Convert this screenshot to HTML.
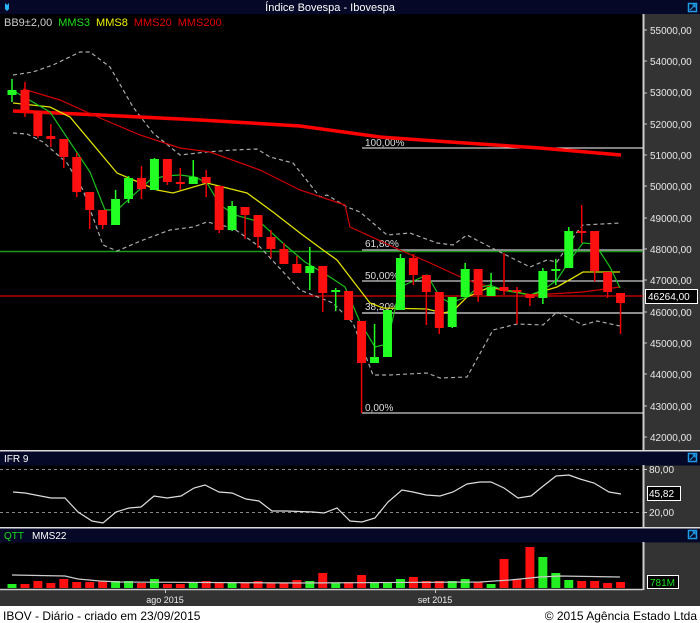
<!DOCTYPE html>
<html><head><meta charset="utf-8"><style>
html,body{margin:0;padding:0;background:#fff;}
svg{display:block;font-family:"Liberation Sans",sans-serif;}
</style></head><body>
<svg width="700" height="623" viewBox="0 0 700 623" xmlns="http://www.w3.org/2000/svg">
<rect x="0" y="0" width="700" height="623" fill="#fff"/>
<!-- header -->
<rect x="0" y="0" width="700" height="14" fill="#050826"/>
<path d="M5 3 L7 5 L9 3 L9 9 L7 11 L5 9 Z" fill="#29b6f6"/>
<text x="330" y="11" fill="#fff" font-size="11" text-anchor="middle">Índice Bovespa - Ibovespa</text>
<rect x="688.5" y="3.5" width="8" height="8" fill="none" stroke="#1e9ce6" stroke-width="1.5"/>
<path d="M690 10 L695 5 M692.5 5 H695 V7.5" stroke="#1e9ce6" stroke-width="1.2" fill="none"/>
<!-- main panel -->
<rect x="0" y="14" width="643" height="436" fill="#000"/>
<rect x="643" y="14" width="57" height="436" fill="#333"/>
<line x1="643.5" y1="14" x2="643.5" y2="450" stroke="#ccc" stroke-width="2"/>
<g font-size="10" fill="#e8e8e8">
<text x="650" y="34">55000,00</text><text x="650" y="65">54000,00</text><text x="650" y="96">53000,00</text><text x="650" y="128">52000,00</text><text x="650" y="159">51000,00</text><text x="650" y="190">50000,00</text><text x="650" y="222">49000,00</text><text x="650" y="253">48000,00</text><text x="650" y="284">47000,00</text><text x="650" y="316">46000,00</text><text x="650" y="347">45000,00</text><text x="650" y="378">44000,00</text><text x="650" y="410">43000,00</text><text x="650" y="441">42000,00</text>
</g>
<g stroke="#ccc" stroke-width="1">
<path d="M644 30h3M644 61h3M644 93h3M644 124h3M644 155h3M644 186h3M644 218h3M644 249h3M644 280h3M644 312h3M644 343h3M644 374h3M644 406h3M644 437h3"/>
</g>
<text x="4" y="26" font-size="11"><tspan fill="#ccc">BB9±2,00</tspan><tspan fill="#19e019" dx="6">MMS3</tspan><tspan fill="#f0f000" dx="6">MMS8</tspan><tspan fill="#e00000" dx="6">MMS20</tspan><tspan fill="#e00000" dx="6">MMS200</tspan></text>
<!-- fib lines -->
<line x1="362" y1="148" x2="643" y2="148" stroke="#fff" stroke-width="1"/>
<line x1="0" y1="251.5" x2="643" y2="251.5" stroke="#1a9a1a" stroke-width="1.5"/>
<line x1="362" y1="250" x2="643" y2="250" stroke="#aaa" stroke-width="1.5"/>
<line x1="362" y1="281" x2="643" y2="281" stroke="#fff" stroke-width="1"/>
<line x1="0" y1="296" x2="643" y2="296" stroke="#e00000" stroke-width="1.2"/>
<line x1="362" y1="313" x2="643" y2="313" stroke="#bbb" stroke-width="1.5"/>
<line x1="362" y1="413" x2="643" y2="413" stroke="#fff" stroke-width="1"/>
<g font-size="10" fill="#ddd">
<text x="365" y="146">100,00%</text><text x="365" y="247">61,80%</text><text x="365" y="279">50,00%</text><text x="365" y="310">38,20%</text><text x="365" y="411">0,00%</text>
</g>
<!-- bollinger -->
<g fill="none" stroke="#aaa" stroke-width="1.2" stroke-dasharray="4,3">
<polyline points="13,75 33,72 53,65 80,52 90,52 110,67 133,107 153,133 180,155 207,152 233,150 257,149 270,157 293,163 320,197 327,195 347,207 360,212 387,235 410,233 437,243 453,245 467,235 490,247 530,267 547,260 557,262 577,232 583,225 620,223"/>
<polyline points="13,133 27,134 43,142 67,163 83,190 103,245 117,251 143,240 170,230 193,227 207,222 233,228 260,247 300,290 333,303 353,323 373,375 390,375 427,373 440,378 467,377 493,330 517,324 543,325 557,312 583,325 597,321 620,326"/>
</g>
<!-- MMS200 -->
<polyline points="13,111 100,115 200,120 300,126 380,137 450,142 540,148 621,155" fill="none" stroke="#ff0000" stroke-width="3.5"/>
<!-- MMS20 -->
<polyline points="23,89 60,100 100,118 140,135 180,148 210,152 260,170 300,190 345,205 350,227 400,250 428,262 467,280 500,290 533,295 583,292 620,287" fill="none" stroke="#d00000" stroke-width="1.2"/>
<!-- MMS8 -->
<polyline points="13,103 50,107 70,117 117,173 157,190 173,193 207,183 247,193 273,212 300,233 323,250 337,260 350,277 370,303 383,308 427,309 443,313 453,311 467,297 490,287 530,295 557,287 583,272 620,272" fill="none" stroke="#e0e000" stroke-width="1.3"/>
<!-- MMS3 -->
<polyline points="12,90 50,112 90,172 105,210 117,210 150,180 165,176 180,175 195,177 207,183 220,205 235,215 260,222 285,245 305,262 330,277 345,287 360,322 375,347 387,344 400,287 427,275 440,297 450,303 467,297 477,288 490,285 503,290 530,295 543,290 557,280 570,260 583,243 595,244 610,267 620,288" fill="none" stroke="#19c019" stroke-width="1.2"/>
<!-- candles -->
<g transform="translate(12 0) scale(0.996 1) translate(-12 0)">
<g stroke-width="1.5">
<g stroke="#22ff22" fill="#22ff22">
<line x1="12" y1="79" x2="12" y2="102"/><rect x="7.5" y="90" width="9" height="5" stroke="none"/>
<line x1="116" y1="190" x2="116" y2="225"/><rect x="111.5" y="199" width="9" height="26" stroke="none"/>
<line x1="129" y1="176" x2="129" y2="203"/><rect x="124.5" y="178" width="9" height="21" stroke="none"/>
<line x1="155" y1="158" x2="155" y2="190"/><rect x="150.5" y="159" width="9" height="31" stroke="none"/>
<line x1="194" y1="160" x2="194" y2="184"/><rect x="189.5" y="177" width="9" height="7" stroke="none"/>
<line x1="233" y1="201" x2="233" y2="231"/><rect x="228.5" y="206" width="9" height="24" stroke="none"/>
<line x1="311" y1="247" x2="311" y2="290"/><rect x="306.5" y="266" width="9" height="7" stroke="none"/>
<line x1="337" y1="288" x2="337" y2="311"/><rect x="332.5" y="290" width="9" height="2" stroke="none"/>
<line x1="376" y1="324" x2="376" y2="363"/><rect x="371.5" y="357" width="9" height="6" stroke="none"/>
<line x1="389" y1="310" x2="389" y2="357"/><rect x="384.5" y="310" width="9" height="47" stroke="none"/>
<line x1="402" y1="254" x2="402" y2="310"/><rect x="397.5" y="258" width="9" height="52" stroke="none"/>
<line x1="454" y1="297" x2="454" y2="328"/><rect x="449.5" y="297" width="9" height="30" stroke="none"/>
<line x1="467" y1="263" x2="467" y2="297"/><rect x="462.5" y="269" width="9" height="28" stroke="none"/>
<line x1="493" y1="273" x2="493" y2="296"/><rect x="488.5" y="287" width="9" height="9" stroke="none"/>
<line x1="545" y1="268" x2="545" y2="304"/><rect x="540.5" y="271" width="9" height="27" stroke="none"/>
<line x1="558" y1="259" x2="558" y2="285"/><rect x="553.5" y="269" width="9" height="2" stroke="none"/>
<line x1="571" y1="227" x2="571" y2="268"/><rect x="566.5" y="231" width="9" height="37" stroke="none"/>
</g>
<g stroke="#ee0000" fill="#ff1010">
<line x1="25" y1="82" x2="25" y2="117"/><rect x="20.5" y="90" width="9" height="20" stroke="none"/>
<line x1="38" y1="111" x2="38" y2="138"/><rect x="33.5" y="111" width="9" height="25" stroke="none"/>
<line x1="51" y1="124" x2="51" y2="147"/><rect x="46.5" y="136" width="9" height="3" stroke="none"/>
<line x1="64" y1="139" x2="64" y2="168"/><rect x="59.5" y="139" width="9" height="18" stroke="none"/>
<line x1="77" y1="153" x2="77" y2="197"/><rect x="72.5" y="157" width="9" height="35" stroke="none"/>
<line x1="90" y1="192" x2="90" y2="229"/><rect x="85.5" y="192" width="9" height="18" stroke="none"/>
<line x1="103" y1="210" x2="103" y2="229"/><rect x="98.5" y="210" width="9" height="15" stroke="none"/>
<line x1="142" y1="166" x2="142" y2="199"/><rect x="137.5" y="178" width="9" height="11" stroke="none"/>
<line x1="168" y1="159" x2="168" y2="185"/><rect x="163.5" y="159" width="9" height="23" stroke="none"/>
<line x1="181" y1="168" x2="181" y2="190"/><rect x="176.5" y="182" width="9" height="2" stroke="none"/>
<line x1="207" y1="170" x2="207" y2="197"/><rect x="202.5" y="177" width="9" height="6" stroke="none"/>
<line x1="220" y1="186" x2="220" y2="233"/><rect x="215.5" y="186" width="9" height="44" stroke="none"/>
<line x1="246" y1="207" x2="246" y2="239"/><rect x="241.5" y="207" width="9" height="8" stroke="none"/>
<line x1="259" y1="215" x2="259" y2="248"/><rect x="254.5" y="215" width="9" height="22" stroke="none"/>
<line x1="272" y1="230" x2="272" y2="258"/><rect x="267.5" y="237" width="9" height="12" stroke="none"/>
<line x1="285" y1="243" x2="285" y2="264"/><rect x="280.5" y="249" width="9" height="15" stroke="none"/>
<line x1="298" y1="256" x2="298" y2="273"/><rect x="293.5" y="264" width="9" height="9" stroke="none"/>
<line x1="324" y1="266" x2="324" y2="312"/><rect x="319.5" y="266" width="9" height="27" stroke="none"/>
<line x1="350" y1="291" x2="350" y2="320"/><rect x="345.5" y="291" width="9" height="29" stroke="none"/>
<line x1="363" y1="321" x2="363" y2="413"/><rect x="358.5" y="321" width="9" height="42" stroke="none"/>
<line x1="415" y1="254" x2="415" y2="285"/><rect x="410.5" y="258" width="9" height="17" stroke="none"/>
<line x1="428" y1="275" x2="428" y2="325"/><rect x="423.5" y="275" width="9" height="17" stroke="none"/>
<line x1="441" y1="292" x2="441" y2="334"/><rect x="436.5" y="292" width="9" height="36" stroke="none"/>
<line x1="480" y1="269" x2="480" y2="302"/><rect x="475.5" y="269" width="9" height="26" stroke="none"/>
<line x1="506" y1="253" x2="506" y2="295"/><rect x="501.5" y="287" width="9" height="4" stroke="none"/>
<line x1="519" y1="287" x2="519" y2="324"/><rect x="514.5" y="290" width="9" height="2" stroke="none"/>
<line x1="532" y1="294" x2="532" y2="306"/><rect x="527.5" y="294" width="9" height="4" stroke="none"/>
<line x1="584" y1="205" x2="584" y2="243"/><rect x="579.5" y="231" width="9" height="2" stroke="none"/>
<line x1="597" y1="231" x2="597" y2="282"/><rect x="592.5" y="231" width="9" height="40" stroke="none"/>
<line x1="610" y1="272" x2="610" y2="298"/><rect x="605.5" y="272" width="9" height="20" stroke="none"/>
<line x1="623" y1="293" x2="623" y2="334"/><rect x="618.5" y="293" width="9" height="10" stroke="none"/>
</g>
</g>
</g>
<rect x="645.5" y="289.5" width="52" height="14" fill="#000" stroke="#fff" stroke-width="1"/>
<text x="648" y="300" font-size="10" fill="#fff">46264,00</text>
<!-- IFR -->
<rect x="0" y="450" width="700" height="1.5" fill="#ddd"/>
<rect x="0" y="451.5" width="700" height="14" fill="#050826"/>
<text x="4" y="462" font-size="10" fill="#fff">IFR 9</text>
<rect x="688.5" y="453.5" width="8" height="8" fill="none" stroke="#1e9ce6" stroke-width="1.5"/>
<path d="M690 460 L695 455 M692.5 455 H695 V457.5" stroke="#1e9ce6" stroke-width="1.2" fill="none"/>
<rect x="0" y="465.5" width="643" height="61.5" fill="#000"/>
<rect x="643" y="465.5" width="57" height="61.5" fill="#333"/>
<line x1="643.5" y1="465" x2="643.5" y2="527" stroke="#ccc" stroke-width="2"/>
<g stroke="#888" stroke-dasharray="3,3"><line x1="0" y1="469.5" x2="643" y2="469.5"/><line x1="0" y1="512.5" x2="643" y2="512.5"/></g>
<path d="M644 469.5h3M644 512.5h3" stroke="#ccc"/>
<text x="649" y="473" font-size="10" fill="#e8e8e8">80,00</text>
<text x="649" y="516" font-size="10" fill="#e8e8e8">20,00</text>
<polyline points="13,492 25,493 51,498 65,498 78,512 92,521 103,523 116,512 129,508 141,507 154,496 167,498 181,496 194,488 205,485 219,492 232,493 246,499 259,501 272,511 286,511 313,512 324,513 337,508 350,521 362,522 375,518 388,502 402,490 413,492 426,495 440,496 453,492 467,484 480,482 491,482 504,488 518,498 531,496 542,487 556,476 569,475 580,479 594,483 609,492 621,494" fill="none" stroke="#ddd" stroke-width="1.2"/>
<rect x="647.5" y="486.5" width="33" height="14" fill="#000" stroke="#fff"/>
<text x="649" y="497" font-size="10" fill="#fff">45,82</text>
<!-- QTT -->
<rect x="0" y="527" width="700" height="1.5" fill="#ddd"/>
<rect x="0" y="528.5" width="700" height="14" fill="#050826"/>
<text x="4" y="539" font-size="10"><tspan fill="#19e019">QTT</tspan><tspan fill="#fff" dx="8">MMS22</tspan></text>
<rect x="688.5" y="530.5" width="8" height="8" fill="none" stroke="#1e9ce6" stroke-width="1.5"/>
<path d="M690 537 L695 532 M692.5 532 H695 V534.5" stroke="#1e9ce6" stroke-width="1.2" fill="none"/>
<rect x="0" y="542.5" width="643" height="47" fill="#000"/>
<rect x="643" y="542.5" width="57" height="64" fill="#333"/>
<line x1="643.5" y1="542" x2="643.5" y2="590" stroke="#ccc" stroke-width="2"/>
<g transform="translate(12 0) scale(0.996 1) translate(-12 0)">
<g fill="#22ee22">
<rect x="7.5" y="584" width="9" height="4"/><rect x="111.5" y="581" width="9" height="7"/><rect x="124.5" y="581" width="9" height="7"/><rect x="150.5" y="579" width="9" height="9"/><rect x="189.5" y="583" width="9" height="5"/><rect x="228.5" y="583" width="9" height="5"/><rect x="306.5" y="581" width="9" height="7"/><rect x="332.5" y="583" width="9" height="5"/><rect x="371.5" y="582" width="9" height="6"/><rect x="384.5" y="582" width="9" height="6"/><rect x="397.5" y="579" width="9" height="9"/><rect x="449.5" y="581" width="9" height="7"/><rect x="462.5" y="579" width="9" height="9"/><rect x="488.5" y="584" width="9" height="4"/><rect x="540.5" y="557" width="9" height="31"/><rect x="553.5" y="573" width="9" height="15"/><rect x="566.5" y="580" width="9" height="8"/>
</g>
<g fill="#ff1010">
<rect x="20.5" y="584" width="9" height="4"/><rect x="33.5" y="581" width="9" height="7"/><rect x="46.5" y="583" width="9" height="5"/><rect x="59.5" y="579" width="9" height="9"/><rect x="72.5" y="582" width="9" height="6"/><rect x="85.5" y="582" width="9" height="6"/><rect x="98.5" y="581" width="9" height="7"/><rect x="137.5" y="583" width="9" height="5"/><rect x="163.5" y="584" width="9" height="4"/><rect x="176.5" y="584" width="9" height="4"/><rect x="202.5" y="581" width="9" height="7"/><rect x="215.5" y="583" width="9" height="5"/><rect x="241.5" y="583" width="9" height="5"/><rect x="254.5" y="581" width="9" height="7"/><rect x="267.5" y="583" width="9" height="5"/><rect x="280.5" y="583" width="9" height="5"/><rect x="293.5" y="580" width="9" height="8"/><rect x="319.5" y="573" width="9" height="15"/><rect x="345.5" y="582" width="9" height="6"/><rect x="358.5" y="575" width="9" height="13"/><rect x="410.5" y="577" width="9" height="11"/><rect x="423.5" y="581" width="9" height="7"/><rect x="436.5" y="581" width="9" height="7"/><rect x="475.5" y="582" width="9" height="6"/><rect x="501.5" y="559" width="9" height="29"/><rect x="514.5" y="579" width="9" height="9"/><rect x="527.5" y="547" width="9" height="41"/><rect x="579.5" y="581" width="9" height="7"/><rect x="592.5" y="581" width="9" height="7"/><rect x="605.5" y="583" width="9" height="5"/><rect x="618.5" y="582" width="9" height="6"/>
</g>
</g>
<polyline points="12,575 65,576 78,579 100,581 120,582 300,583 480,582 510,580 540,577 560,576 620,577" fill="none" stroke="#ccc" stroke-width="1.2"/>
<rect x="647.5" y="575.5" width="31" height="13" fill="#000" stroke="#fff"/>
<text x="650" y="586" font-size="10" fill="#19e019">781M</text>
<!-- date axis -->
<rect x="0" y="589" width="643" height="18" fill="#333"/>
<line x1="0" y1="589.5" x2="643" y2="589.5" stroke="#ccc" stroke-width="1.5"/>
<path d="M165.5 590v3M435.5 590v3" stroke="#ccc"/>
<text x="165" y="603" font-size="9" fill="#eee" text-anchor="middle">ago 2015</text>
<text x="435" y="603" font-size="9" fill="#eee" text-anchor="middle">set 2015</text>
<!-- footer -->
<rect x="0" y="606" width="700" height="17" fill="#fff"/>
<text x="3" y="620" font-size="12" fill="#000">IBOV - Diário - criado em 23/09/2015</text>
<text x="697" y="620" font-size="12" fill="#000" text-anchor="end">© 2015 Agência Estado Ltda</text>
</svg>
</body></html>
